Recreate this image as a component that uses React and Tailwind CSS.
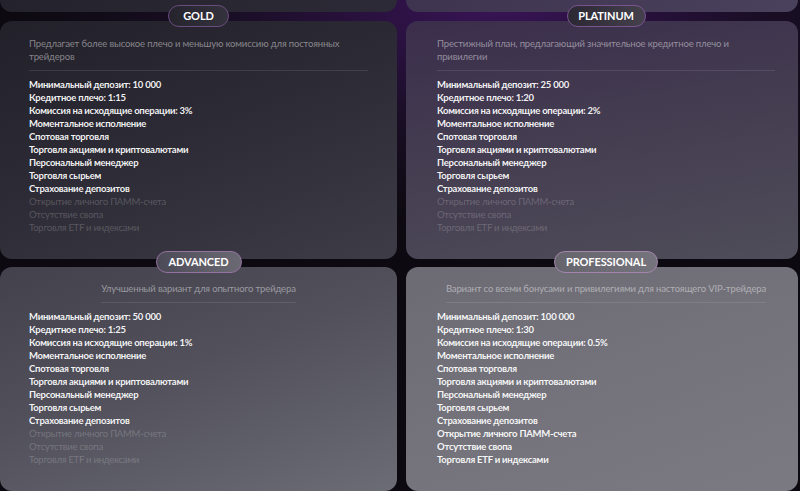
import React from 'react';

const features = [
  'Моментальное исполнение',
  'Спотовая торговля',
  'Торговля акциями и криптовалютами',
  'Персональный менеджер',
  'Торговля сырьем',
  'Страхование депозитов',
  'Открытие личного ПАММ-счета',
  'Отсутствие свопа',
  'Торговля ETF и индексами',
];

const plans = [
  {
    name: 'GOLD',
    desc: 'Предлагает более высокое плечо и меньшую комиссию для постоянных трейдеров',
    deposit: '10 000',
    leverage: '1:15',
    fee: '3%',
    enabled: 6,
    side: 'left',
    card: 'bg-[linear-gradient(160deg,#222029_0%,#2c2a34_45%,#3d3c47_100%)]',
    badge: 'w-[61px] bg-[linear-gradient(90deg,#25232c,#34323d)] border-[#6a4d80]',
    pad: 'pt-[16px]',
  },
  {
    name: 'PLATINUM',
    desc: 'Престижный план, предлагающий значительное кредитное плечо и привилегии',
    deposit: '25 000',
    leverage: '1:20',
    fee: '2%',
    enabled: 6,
    side: 'right',
    card: 'bg-[linear-gradient(170deg,#3b2e4c_0%,#433b50_40%,#4f4d59_100%)]',
    badge: 'w-[79px] bg-[linear-gradient(90deg,#2c2833,#44414c)] border-[#7a5490]',
    pad: 'pt-[16px]',
  },
  {
    name: 'ADVANCED',
    desc: 'Улучшенный вариант для опытного трейдера',
    deposit: '50 000',
    leverage: '1:25',
    fee: '1%',
    enabled: 6,
    side: 'left',
    card: 'bg-[linear-gradient(160deg,#42414c_0%,#51505b_45%,#6c6c75_100%)]',
    badge: 'w-[86px] bg-[linear-gradient(90deg,#4c4a56,#6b6a74)] border-[#95729f]',
    pad: 'pt-[15px]',
  },
  {
    name: 'PROFESSIONAL',
    desc: 'Вариант со всеми бонусами и привилегиями для настоящего VIP-трейдера',
    deposit: '100 000',
    leverage: '1:30',
    fee: '0.5%',
    enabled: 9,
    side: 'right',
    card: 'bg-[linear-gradient(160deg,#6c6b74_0%,#74737b_50%,#7b7a82_100%)]',
    badge: 'w-[104px] bg-[linear-gradient(90deg,#66656e,#75747c)] border-[#a286ad]',
    pad: 'pt-[15px]',
  },
];

const PlanCard = ({ plan }) => {
  const left = plan.side === 'left';
  const padX = left ? 'pl-[29px] pr-[29px]' : 'pl-[31px] pr-[23px]';
  const badgeSpan = left ? 'left-[29px] right-[29px]' : 'left-[31px] right-[23px]';
  return (
    <div className={`relative rounded-[12px] ${plan.card} ${padX} ${plan.pad} pb-[25px]`}>
      <div className={`absolute -top-[16px] flex justify-center ${badgeSpan}`}>
        <div className={`flex h-[22px] items-center justify-center rounded-full border text-[11px] font-bold tracking-[-0.1px] text-white ${plan.badge}`}>
          {plan.name}
        </div>
      </div>
      <div className="flex justify-center">
        <p className="w-fit border-b border-white/10 pb-[7px] text-left text-[9.5px] leading-[13px] tracking-[-0.15px] text-white/45">
          {plan.desc}
        </p>
      </div>
      <ul className="mt-[7px] text-[9.5px] font-bold leading-[13px] tracking-[-0.25px] text-white/95">
        <li>Минимальный депозит: {plan.deposit}</li>
        <li>Кредитное плечо: {plan.leverage}</li>
        <li>Комиссия на исходящие операции: {plan.fee}</li>
        {features.map((f, i) => (
          <li key={f} className={i < plan.enabled ? '' : 'font-normal text-white/20'}>
            {f}
          </li>
        ))}
      </ul>
    </div>
  );
};

export default function App() {
  return (
    <div className="h-[491px] w-[800px] overflow-hidden bg-[radial-gradient(ellipse_60%_45%_at_62%_0%,#3a1458_0%,#1a0e26_55%,#0c0a10_100%)] font-['Lato',sans-serif]">
      {/* tail of the previous row */}
      <div className="grid grid-cols-[397px_392px] gap-x-[9px]">
        <div className="h-[12px] rounded-b-[12px] bg-[linear-gradient(90deg,#24232d,#2c2a36)]" />
        <div className="h-[12px] rounded-b-[12px] bg-[linear-gradient(90deg,#3e3450,#4a415c)]" />
      </div>
      <div className="mt-[9px] grid grid-cols-[397px_392px] gap-x-[9px] gap-y-[8px]">
        {plans.map((p) => (
          <PlanCard key={p.name} plan={p} />
        ))}
      </div>
    </div>
  );
}
